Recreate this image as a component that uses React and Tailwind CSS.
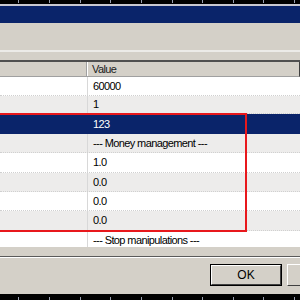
import React from "react";

const ticks = [18, 49, 80, 110, 141, 172, 202, 233, 263, 294];

function Ruler({ bottom }) {
  return (
    <svg width="300" height={bottom ? 6 : 4} className="block">
      <rect width="300" height={bottom ? 6 : 4} fill="#000" />
      {ticks.map((x) => (
        <rect key={x} x={x} y={bottom ? 3 : 0} width="1" height="3" fill="#9aa0b0" />
      ))}
    </svg>
  );
}

const rows = [
  { v: "60000", h: "h-[19px]", bg: "bg-white" },
  { v: "1", h: "h-[18px]", bg: "bg-[#edeceb]" },
  { v: "123", h: "h-[20px]", bg: "bg-[#0a246a]", sel: true },
  { v: "--- Money management ---", h: "h-[19px]", bg: "bg-[#edeceb]" },
  { v: "1.0", h: "h-[20px]", bg: "bg-white" },
  { v: "0.0", h: "h-[19px]", bg: "bg-[#edeceb]" },
  { v: "0.0", h: "h-[19px]", bg: "bg-white" },
  { v: "0.0", h: "h-[20px]", bg: "bg-[#edeceb]" },
  { v: "--- Stop manipulations ---", h: "h-[19px]", bg: "bg-white" },
];

export default function App() {
  return (
    <div className="w-[300px] h-[300px] overflow-hidden bg-[#d4d0c8] flex flex-col font-['Liberation_Sans',Arial,sans-serif] text-[11px] tracking-[-0.6px] text-black relative">
      <Ruler />
      <div className="h-[2px] bg-[#c8c8d0]" />
      <div className="h-[17px] bg-[#0a246a]" />
      <div className="h-[27px] bg-[#d4d0c8]" />
      <div className="h-[2px] bg-[#ecebe8]" />
      <div className="h-[8px] bg-[#d4d0c8]" />
      <div className="h-[187px] flex flex-col border-t-2 border-t-[#505050] overflow-hidden">
        <div className="h-[15px] flex border-b border-b-[#a0a0a0] bg-[#d4d0c8] border-r border-r-[#404040]">
          <div className="w-[87px] border-r border-r-[#a0a0a0]" />
          <div className="w-px bg-white" />
          <div className="pl-[4px] leading-[15px] text-[#202020]">Value</div>
        </div>
        {rows.map((r, i) => (
          <div
            key={i}
            className={`${r.h} shrink-0 flex ${r.bg} ${r.sel ? "" : "border-b border-dotted border-b-[#d0d0d0]"}`}
          >
            <div className={`w-[88px] ${r.sel ? "" : "border-r border-r-[#d8d8d8]"}`} />
            <div className={`pl-[5px] flex items-center ${r.sel ? "text-white" : ""}`}>{r.v}</div>
          </div>
        ))}
      </div>
      <div className="h-[9px] bg-[#d4d0c8]" />
      <div className="h-[2px] bg-[#5a5a5a] border-b border-b-[#ffffff]" />
      <div className="flex-1 flex items-start pt-[6px] pl-[210px] gap-[5px]">
        <div className="w-[72px] h-[22px] border border-black flex shrink-0">
          <div className="flex-1 border border-t-white border-l-white border-r-[#404040] border-b-[#404040] flex items-center justify-center text-[12px] tracking-normal">
            OK
          </div>
        </div>
        <div className="w-[72px] h-[22px] border border-t-white border-l-white border-r-[#404040] border-b-[#404040] shrink-0" />
      </div>
      <Ruler bottom />
      <div className="absolute left-[-4px] top-[113px] w-[251px] h-[119px] border-2 border-[#e8181c]" />
    </div>
  );
}
